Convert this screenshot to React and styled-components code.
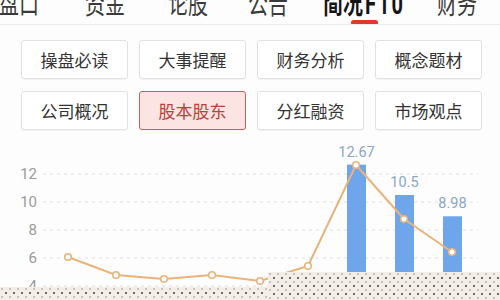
import React from "react";
import styled, { createGlobalStyle } from "styled-components";

const GlobalStyle = createGlobalStyle`
  html, body {
    margin: 0;
    padding: 0;
    background: #fdfdfd;
  }
  body {
    width: 500px;
    height: 300px;
    overflow: hidden;
    font-family: "Noto Sans CJK SC", "Noto Sans", sans-serif;
  }
`;

const Page = styled.div`
  position: relative;
  width: 500px;
  height: 300px;
  overflow: hidden;
  background: #fdfdfd;
`;

const TabBar = styled.div`
  display: flex;
  align-items: flex-end;
  height: 24px;
  border-bottom: 1px solid #ececec;
  margin-left: -1px;
  overflow: hidden;
`;

const Tab = styled.div`
  position: relative;
  flex: 0 0 ${(p) => p.$w}px;
  height: 24px;
  font-size: 20px;
  line-height: 20px;
  white-space: nowrap;
  color: ${(p) => (p.$active ? "#151515" : "#3a3a3a")};
  font-weight: ${(p) => (p.$active ? 700 : 400)};
`;

const TabText = styled.span`
  display: inline-block;
  transform-origin: 50% 100%;
  transform: translateY(-3px) scaleY(1.45);
`;

const Latin = styled.span`
  margin-left: 2px;
  letter-spacing: 2px;
  font-family: Roboto, "Noto Sans", sans-serif;
`;

const Indicator = styled.span`
  position: absolute;
  left: 28px;
  bottom: -1px;
  width: 27px;
  height: 5px;
  border-radius: 3px;
  background: #e2372f;
`;

const ButtonGrid = styled.div`
  display: grid;
  grid-template-columns: repeat(4, 107px);
  column-gap: 11px;
  row-gap: 12px;
  padding: 15px 0 0 21px;
`;

const Chip = styled.div`
  height: 39px;
  box-sizing: border-box;
  display: flex;
  align-items: center;
  justify-content: center;
  font-size: 17px;
  border-radius: 3px;
  border: 1px solid ${(p) => (p.$active ? "#c4615b" : "#e1e1e1")};
  background: ${(p) => (p.$active ? "#fbe4e2" : "#ffffff")};
  color: ${(p) => (p.$active ? "#b8413a" : "#333333")};
  box-shadow: 0 1px 1px rgba(0, 0, 0, 0.04);
`;

const ChartWrap = styled.div`
  margin-top: 9px;
  height: 160px;
`;

const Overlay = styled.div`
  position: absolute;
  left: ${(p) => p.$left}px;
  top: ${(p) => p.$top}px;
  width: ${(p) => p.$w}px;
  height: ${(p) => 300 - p.$top}px;
  background-color: #f3eee7;
  background-image: radial-gradient(circle, #6b6b6b 0.9px, transparent 1.2px),
    radial-gradient(circle, #c9c2b8 0.9px, transparent 1.2px);
  background-size: 8px 8px, 8px 8px;
  background-position: 2px 2px, 6px 6px;
`;

const tabs = [
  { label: "盘口", w: 86 },
  { label: "资金", w: 83 },
  { label: "论股", w: 80 },
  { label: "公告", w: 75 },
  { label: "简况", latin: "F10", w: 114, active: true },
  { label: "财务", w: 80 },
];

const chips = [
  "操盘必读",
  "大事提醒",
  "财务分析",
  "概念题材",
  "公司概况",
  "股本股东",
  "分红融资",
  "市场观点",
];

// chart coordinates (svg origin at page y=140)
const Y0 = 140;
const yOf = (v) => 175 + (12 - v) * 14 - Y0;
const grid = [12, 10, 8, 6, 4];
const pts = [
  [68, 258],
  [116, 276],
  [164, 280],
  [212, 276],
  [260, 282],
  [308, 267],
  [356, 166],
  [404, 220],
  [452, 253],
];
const bars = [
  { x: 347, v: 12.67, label: "12.67" },
  { x: 395, v: 10.5, label: "10.5" },
  { x: 443, v: 8.98, label: "8.98" },
];

function Chart() {
  const line = pts.map(([x, y]) => `${x},${y - Y0}`).join(" ");
  return (
    <svg width="500" height="160" viewBox="0 0 500 160">
      {grid.map((g) => (
        <g key={g}>
          <line
            x1="43"
            x2="478"
            y1={yOf(g)}
            y2={yOf(g)}
            stroke="#dedede"
            strokeWidth="1"
            strokeDasharray="3 4"
          />
          <text
            x="37"
            y={yOf(g) + 5}
            textAnchor="end"
            fontSize="15"
            fontFamily="Roboto, sans-serif"
            fill="#9a9a9a"
          >
            {g}
          </text>
        </g>
      ))}
      {bars.map((b) => (
        <g key={b.label}>
          <rect x={b.x} y={yOf(b.v)} width="19" height={160 - yOf(b.v)} fill="#6fa5ec" />
          <text
            x={b.x + 9.5}
            y={yOf(b.v) - 8}
            textAnchor="middle"
            fontSize="14.5"
            fontFamily="Roboto, sans-serif"
            fill="#8ba6c6"
          >
            {b.label}
          </text>
        </g>
      ))}
      <polyline points={line} fill="none" stroke="#e9b47c" strokeWidth="2" strokeLinejoin="round" />
      {pts.map(([x, y], i) => (
        <circle key={i} cx={x} cy={y - Y0} r="3.3" fill="#ffffff" stroke="#e9b47c" strokeWidth="1.6" />
      ))}
    </svg>
  );
}

export default function App() {
  return (
    <Page>
      <GlobalStyle />
      <TabBar>
        {tabs.map((t) => (
          <Tab key={t.label} $w={t.w} $active={t.active}>
            <TabText>
              {t.label}
              {t.latin && <Latin>{t.latin}</Latin>}
            </TabText>
            {t.active && <Indicator />}
          </Tab>
        ))}
      </TabBar>
      <ButtonGrid>
        {chips.map((c) => (
          <Chip key={c} $active={c === "股本股东"}>
            {c}
          </Chip>
        ))}
      </ButtonGrid>
      <ChartWrap>
        <Chart />
      </ChartWrap>
      <Overlay $left={0} $top={287} $w={268} />
      <Overlay $left={268} $top={272} $w={232} />
    </Page>
  );
}
